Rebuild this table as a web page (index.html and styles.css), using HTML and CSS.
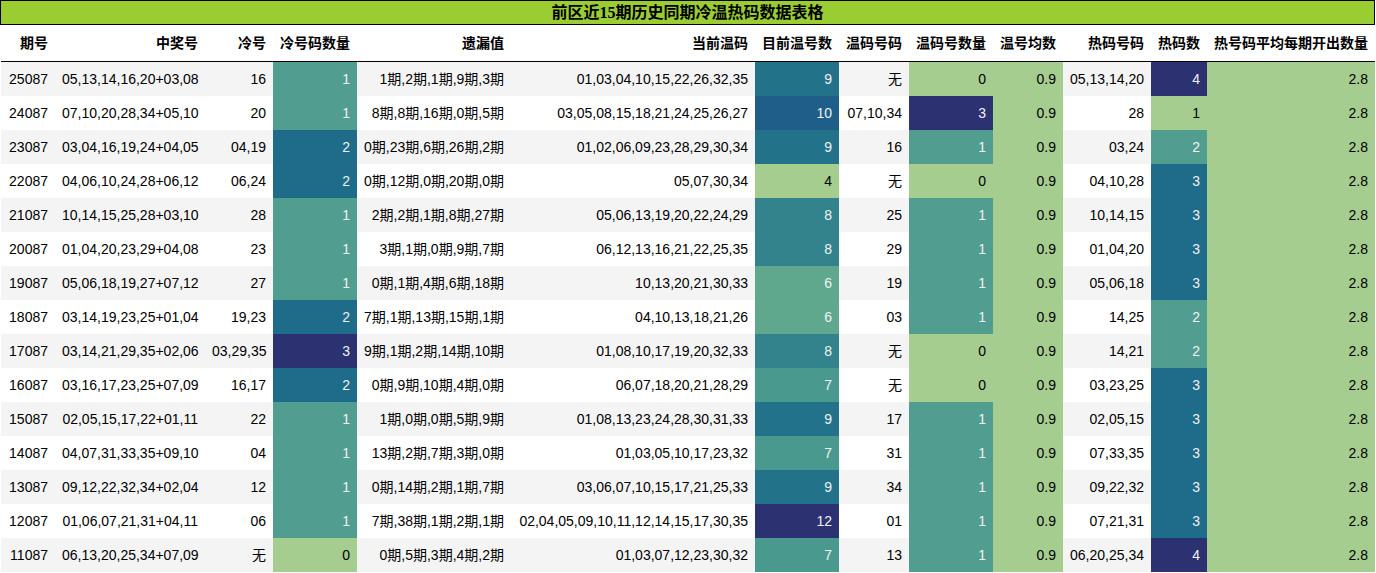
FILE: index.html
```html
<!DOCTYPE html>
<html lang="zh-CN">
<head>
<meta charset="utf-8">
<title>前区近15期历史同期冷温热码数据表格</title>
<link rel="stylesheet" href="styles.css">
</head>
<body>
<div class="sheet">
  <div class="title">前区近15期历史同期冷温热码数据表格</div>
  <table class="grid">
    <colgroup>
      <col class="w-issue"><col class="w-win"><col class="w-cold"><col class="w-coldn"><col class="w-miss"><col class="w-warm"><col class="w-warmn"><col class="w-warmc"><col class="w-warmcn"><col class="w-warmavg"><col class="w-hot"><col class="w-hotn"><col class="w-hotavg">
    </colgroup>
    <thead>
      <tr><th>期号</th><th>中奖号</th><th>冷号</th><th>冷号码数量</th><th>遗漏值</th><th>当前温码</th><th>目前温号数</th><th>温码号码</th><th>温码号数量</th><th>温号均数</th><th>热码号码</th><th>热码数</th><th>热号码平均每期开出数量</th></tr>
    </thead>
    <tbody>
      <tr class="odd"><td>25087</td><td>05,13,14,16,20+03,08</td><td>16</td><td class="lv33">1</td><td>1期,2期,1期,9期,3期</td><td>01,03,04,10,15,22,26,32,35</td><td class="lv63">9</td><td>无</td><td class="lv0">0</td><td class="lv0">0.9</td><td>05,13,14,20</td><td class="lv100">4</td><td class="lv0">2.8</td></tr>
      <tr><td>24087</td><td>07,10,20,28,34+05,10</td><td>20</td><td class="lv33">1</td><td>8期,8期,16期,0期,5期</td><td>03,05,08,15,18,21,24,25,26,27</td><td class="lv75">10</td><td>07,10,34</td><td class="lv100">3</td><td class="lv0">0.9</td><td>28</td><td class="lv0">1</td><td class="lv0">2.8</td></tr>
      <tr class="odd"><td>23087</td><td>03,04,16,19,24+04,05</td><td>04,19</td><td class="lv67">2</td><td>0期,23期,6期,26期,2期</td><td>01,02,06,09,23,28,29,30,34</td><td class="lv63">9</td><td>16</td><td class="lv33">1</td><td class="lv0">0.9</td><td>03,24</td><td class="lv33">2</td><td class="lv0">2.8</td></tr>
      <tr><td>22087</td><td>04,06,10,24,28+06,12</td><td>06,24</td><td class="lv67">2</td><td>0期,12期,0期,20期,0期</td><td>05,07,30,34</td><td class="lv0">4</td><td>无</td><td class="lv0">0</td><td class="lv0">0.9</td><td>04,10,28</td><td class="lv67">3</td><td class="lv0">2.8</td></tr>
      <tr class="odd"><td>21087</td><td>10,14,15,25,28+03,10</td><td>28</td><td class="lv33">1</td><td>2期,2期,1期,8期,27期</td><td>05,06,13,19,20,22,24,29</td><td class="lv50">8</td><td>25</td><td class="lv33">1</td><td class="lv0">0.9</td><td>10,14,15</td><td class="lv67">3</td><td class="lv0">2.8</td></tr>
      <tr><td>20087</td><td>01,04,20,23,29+04,08</td><td>23</td><td class="lv33">1</td><td>3期,1期,0期,9期,7期</td><td>06,12,13,16,21,22,25,35</td><td class="lv50">8</td><td>29</td><td class="lv33">1</td><td class="lv0">0.9</td><td>01,04,20</td><td class="lv67">3</td><td class="lv0">2.8</td></tr>
      <tr class="odd"><td>19087</td><td>05,06,18,19,27+07,12</td><td>27</td><td class="lv33">1</td><td>0期,1期,4期,6期,18期</td><td>10,13,20,21,30,33</td><td class="lv25">6</td><td>19</td><td class="lv33">1</td><td class="lv0">0.9</td><td>05,06,18</td><td class="lv67">3</td><td class="lv0">2.8</td></tr>
      <tr><td>18087</td><td>03,14,19,23,25+01,04</td><td>19,23</td><td class="lv67">2</td><td>7期,1期,13期,15期,1期</td><td>04,10,13,18,21,26</td><td class="lv25">6</td><td>03</td><td class="lv33">1</td><td class="lv0">0.9</td><td>14,25</td><td class="lv33">2</td><td class="lv0">2.8</td></tr>
      <tr class="odd"><td>17087</td><td>03,14,21,29,35+02,06</td><td>03,29,35</td><td class="lv100">3</td><td>9期,1期,2期,14期,10期</td><td>01,08,10,17,19,20,32,33</td><td class="lv50">8</td><td>无</td><td class="lv0">0</td><td class="lv0">0.9</td><td>14,21</td><td class="lv33">2</td><td class="lv0">2.8</td></tr>
      <tr><td>16087</td><td>03,16,17,23,25+07,09</td><td>16,17</td><td class="lv67">2</td><td>0期,9期,10期,4期,0期</td><td>06,07,18,20,21,28,29</td><td class="lv38">7</td><td>无</td><td class="lv0">0</td><td class="lv0">0.9</td><td>03,23,25</td><td class="lv67">3</td><td class="lv0">2.8</td></tr>
      <tr class="odd"><td>15087</td><td>02,05,15,17,22+01,11</td><td>22</td><td class="lv33">1</td><td>1期,0期,0期,5期,9期</td><td>01,08,13,23,24,28,30,31,33</td><td class="lv63">9</td><td>17</td><td class="lv33">1</td><td class="lv0">0.9</td><td>02,05,15</td><td class="lv67">3</td><td class="lv0">2.8</td></tr>
      <tr><td>14087</td><td>04,07,31,33,35+09,10</td><td>04</td><td class="lv33">1</td><td>13期,2期,7期,3期,0期</td><td>01,03,05,10,17,23,32</td><td class="lv38">7</td><td>31</td><td class="lv33">1</td><td class="lv0">0.9</td><td>07,33,35</td><td class="lv67">3</td><td class="lv0">2.8</td></tr>
      <tr class="odd"><td>13087</td><td>09,12,22,32,34+02,04</td><td>12</td><td class="lv33">1</td><td>0期,14期,2期,1期,7期</td><td>03,06,07,10,15,17,21,25,33</td><td class="lv63">9</td><td>34</td><td class="lv33">1</td><td class="lv0">0.9</td><td>09,22,32</td><td class="lv67">3</td><td class="lv0">2.8</td></tr>
      <tr><td>12087</td><td>01,06,07,21,31+04,11</td><td>06</td><td class="lv33">1</td><td>7期,38期,1期,2期,1期</td><td>02,04,05,09,10,11,12,14,15,17,30,35</td><td class="lv100">12</td><td>01</td><td class="lv33">1</td><td class="lv0">0.9</td><td>07,21,31</td><td class="lv67">3</td><td class="lv0">2.8</td></tr>
      <tr class="odd"><td>11087</td><td>06,13,20,25,34+07,09</td><td>无</td><td class="lv0">0</td><td>0期,5期,3期,4期,2期</td><td>01,03,07,12,23,30,32</td><td class="lv38">7</td><td>13</td><td class="lv33">1</td><td class="lv0">0.9</td><td>06,20,25,34</td><td class="lv100">4</td><td class="lv0">2.8</td></tr>
    </tbody>
  </table>
</div>
</body>
</html>
```

FILE: styles.css
```css
html, body {
  margin: 0;
  padding: 0;
  background: #ffffff;
}

.sheet {
  width: 1376px;
  font-family: "Liberation Sans", "Noto Sans CJK SC", sans-serif;
  color: #000000;
}

.title {
  box-sizing: border-box;
  width: 1375px;
  height: 25px;
  border: 1px solid #000000;
  background: #9acd32;
  font-family: "Liberation Serif", "Noto Sans CJK SC", serif;
  font-weight: bold;
  font-size: 16px;
  line-height: 23px;
  text-align: center;
}

.grid {
  margin-left: 1px;
  width: 1374px;
  table-layout: fixed;
  border-collapse: separate;
  border-spacing: 0;
  font-size: 14px;
}

.w-issue { width: 54px; }
.w-win { width: 150px; }
.w-cold { width: 68px; }
.w-coldn { width: 84px; }
.w-miss { width: 154px; }
.w-warm { width: 244px; }
.w-warmn { width: 84px; }
.w-warmc { width: 70px; }
.w-warmcn { width: 84px; }
.w-warmavg { width: 70px; }
.w-hot { width: 88px; }
.w-hotn { width: 56px; }
.w-hotavg { width: 168px; }

.grid th {
  padding: 0 7px;
  height: 36px;
  line-height: 36px;
  border-bottom: 1px solid #000000;
  font-weight: bold;
  text-align: right;
  white-space: nowrap;
  overflow: hidden;
  background: #ffffff;
}

.grid td {
  padding: 0 7px;
  height: 34px;
  line-height: 34px;
  text-align: right;
  white-space: nowrap;
  overflow: hidden;
  background: #ffffff;
}

.grid .odd > td { background: #f4f4f4; }

.grid tr > td.lv0 { background: #a5cd90; color: #000000; }
.grid tr > td.lv25 { background: #5fa88e; color: #f1f1f1; }
.grid tr > td.lv33 { background: #519e90; color: #f1f1f1; }
.grid tr > td.lv38 { background: #4a998f; color: #f1f1f1; }
.grid tr > td.lv50 { background: #33838c; color: #f1f1f1; }
.grid tr > td.lv63 { background: #22738a; color: #f1f1f1; }
.grid tr > td.lv67 { background: #1f6b8a; color: #f1f1f1; }
.grid tr > td.lv75 { background: #1f5e88; color: #f1f1f1; }
.grid tr > td.lv100 { background: #2c3172; color: #f1f1f1; }
```
